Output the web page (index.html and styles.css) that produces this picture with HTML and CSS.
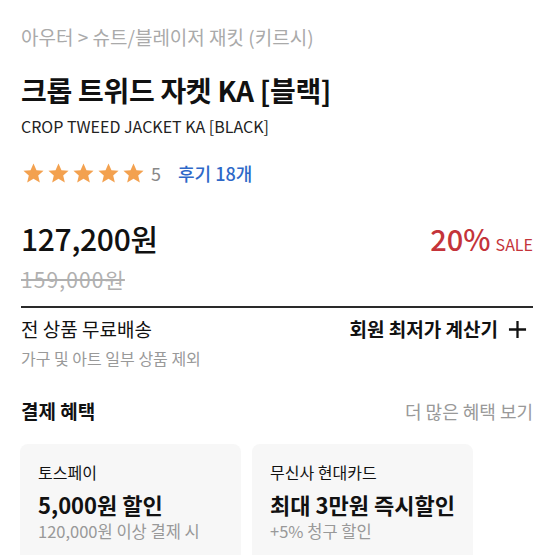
FILE: index.html
```html
<!DOCTYPE html>
<html>
<head>
  <meta charset="UTF-8">
  <title>크롭 트위드 자켓 KA</title>
  <link rel="stylesheet" href="styles.css">
</head>
<body>
  <div class="page">
    <div class="crumb">아우터 &gt; 슈트/블레이저 재킷 (키르시)</div>

    <h1 class="title">크롭 트위드 자켓 KA [블랙]</h1>
    <div class="title-en">CROP TWEED JACKET KA [BLACK]</div>

    <!-- rating -->
    <div class="rating">
      <span class="stars">
        <svg viewBox="0 0 24 24"><path d="M12 1.5l3.1 7 7.4.6-5.6 4.9 1.7 7.3L12 17.4l-6.6 3.9 1.7-7.3L1.5 9.1l7.4-.6z"/></svg>
        <svg viewBox="0 0 24 24"><path d="M12 1.5l3.1 7 7.4.6-5.6 4.9 1.7 7.3L12 17.4l-6.6 3.9 1.7-7.3L1.5 9.1l7.4-.6z"/></svg>
        <svg viewBox="0 0 24 24"><path d="M12 1.5l3.1 7 7.4.6-5.6 4.9 1.7 7.3L12 17.4l-6.6 3.9 1.7-7.3L1.5 9.1l7.4-.6z"/></svg>
        <svg viewBox="0 0 24 24"><path d="M12 1.5l3.1 7 7.4.6-5.6 4.9 1.7 7.3L12 17.4l-6.6 3.9 1.7-7.3L1.5 9.1l7.4-.6z"/></svg>
        <svg viewBox="0 0 24 24"><path d="M12 1.5l3.1 7 7.4.6-5.6 4.9 1.7 7.3L12 17.4l-6.6 3.9 1.7-7.3L1.5 9.1l7.4-.6z"/></svg>
      </span>
      <span class="score">5</span>
      <span class="reviews">후기 18개</span>
    </div>

    <!-- price -->
    <div class="price-row">
      <div class="price">127,200원</div>
      <div class="sale"><span class="pct">20%</span><span class="sale-tag">SALE</span></div>
    </div>
    <div class="old-price">159,000원</div>

    <div class="divider"></div>

    <div class="ship-row">
      <div>
        <div class="ship">전 상품 무료배송</div>
        <div class="ship-note">가구 및 아트 일부 상품 제외</div>
      </div>
      <div class="calc">회원 최저가 계산기
        <svg viewBox="0 0 20 20"><path d="M10 1v18M1 10h18" stroke="#111" stroke-width="2.4"/></svg>
      </div>
    </div>

    <div class="benefit-head">
      <div class="benefit-title">결제 혜택</div>
      <div class="more">더 많은 혜택 보기</div>
    </div>

    <div class="cards">
      <div class="card">
        <div class="card-name">토스페이</div>
        <div class="card-main">5,000원 할인</div>
        <div class="card-sub">120,000원 이상 결제 시</div>
      </div>
      <div class="card">
        <div class="card-name">무신사 현대카드</div>
        <div class="card-main">최대 3만원 즉시할인</div>
        <div class="card-sub">+5% 청구 할인</div>
      </div>
    </div>
  </div>
</body>
</html>
```

FILE: styles.css
```css
body { margin: 0; font-family: "Noto Sans CJK KR", "Noto Sans", sans-serif; color: #111; background: #fff; overflow: hidden; }
.page { padding: 23px 22px 0 21px; }
.crumb { font-size: 19px; color: #aaa; line-height: 28px; }
.title { margin: 21px 0 0; font-size: 28px; font-weight: 700; line-height: 36px; letter-spacing: -0.3px; }
.title-en { font-size: 16px; line-height: 22px; margin-top: 7px; color: #222; }

.rating { display: flex; align-items: center; margin-top: 24px; height: 24px; }
.stars { display: flex; gap: 2px; margin-left: 1px; }
.stars svg { width: 23px; height: 23px; fill: #f3a14f; }
.score { font-size: 18px; color: #888; margin-left: 6px; }
.reviews { font-size: 18px; color: #2e68c8; margin-left: 17px; font-weight: 500; }

.price-row { display: flex; justify-content: space-between; align-items: baseline; margin-top: 34px; line-height: 38px; }
.price { font-size: 30px; font-weight: 500; letter-spacing: -0.3px; }
.pct { font-size: 29px; color: #c4343a; font-weight: 500; }
.sale-tag { font-size: 16px; color: #c4343a; margin-left: 5px; }
.old-price { font-size: 21px; color: #b0b0b0; text-decoration: line-through; line-height: 28px; margin-top: 2px; letter-spacing: 1.1px; }

.divider { height: 2px; background: #2a2a2a; margin-top: 13px; }

.ship-row { display: flex; justify-content: space-between; align-items: flex-start; margin-top: 8px; }
.ship { font-size: 19px; line-height: 26px; }
.ship-note { font-size: 16px; color: #999; line-height: 24px; margin-top: 4px; }
.calc { display: flex; align-items: center; gap: 10px; font-size: 19px; font-weight: 700; line-height: 26px; }
.calc svg { width: 19px; height: 19px; margin-right: 6px; }

.benefit-head { display: flex; justify-content: space-between; align-items: center; margin-top: 28px; line-height: 26px; }
.benefit-title { font-size: 19px; font-weight: 700; }
.more { font-size: 18px; color: #999; }

.cards { display: flex; gap: 11px; margin-top: 20px; margin-left: -1px; }
.card { width: 221px; height: 130px; background: #f7f7f7; border-radius: 8px; padding: 16px 18px 0; box-sizing: border-box; }
.card-name { font-size: 16px; line-height: 24px; }
.card-main { font-size: 22px; font-weight: 700; line-height: 30px; margin-top: 5px; }
.card-sub { font-size: 16.5px; color: #999; line-height: 24px; }
```
